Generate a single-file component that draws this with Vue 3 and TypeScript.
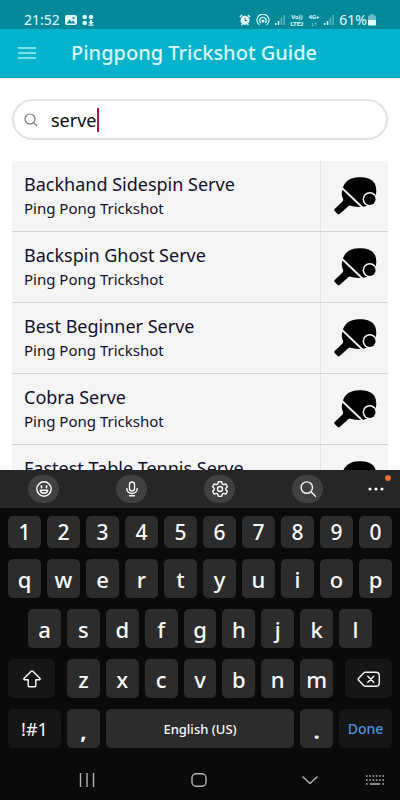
<script setup lang="ts">
import { ref } from 'vue'

const query = ref<string>('serve')

const results: string[] = [
  'Backhand Sidespin Serve',
  'Backspin Ghost Serve',
  'Best Beginner Serve',
  'Cobra Serve',
  'Fastest Table Tennis Serve',
]

const digits: string[] = [...'1234567890']
const topRow: string[] = [...'qwertyuiop']
const homeRow: string[] = [...'asdfghjkl']
const bottomRow: string[] = [...'zxcvbnm']

function type(key: string): void {
  query.value += key
}

function erase(): void {
  query.value = query.value.slice(0, -1)
}
</script>

<template>
  <div class="screen">
    <div class="status">
      <span class="clock">21:52</span>
      <svg class="pic" viewBox="0 0 12 12" width="12" height="12">
        <rect x="0" y="1" width="12" height="10" rx="2" fill="#e4fbfd" />
        <path d="M1.5 9.5 4.5 5.5 6.5 8 8 6.5 10.5 9.5Z" fill="#04899a" />
        <circle cx="8.5" cy="4" r="1.1" fill="#04899a" />
      </svg>
      <svg class="dots" viewBox="0 0 12 12" width="12" height="12" fill="#e4fbfd">
        <circle cx="2.7" cy="3" r="2.3" />
        <circle cx="9" cy="3" r="2.3" />
        <circle cx="2.7" cy="9" r="2.3" />
        <path d="M8 6h2v2h1.800L9 10.500 6.200 8H8ZM6.500 10.500h5v1.300h-5Z" />
      </svg>
      <span class="grow"></span>
      <svg viewBox="0 0 12 12" width="12" height="12" fill="none" stroke="#e4fbfd">
        <circle cx="6" cy="6.300" r="4.500" fill="#e4fbfd" stroke="none" />
        <path d="M.8 3 3 1.200M11.200 3 9 1.200M2.500 11.200l1-1M9.500 11.200l-1-1" stroke-width="1.500" />
        <path d="M6 3.800v2.700h2" stroke="#04899a" />
      </svg>
      <svg viewBox="0 0 14 12" width="14" height="12" fill="none" stroke="#e4fbfd" stroke-width="1.200">
        <path d="M3.500 11a6 6 0 1 1 7 0M4.800 9a3.300 3.300 0 1 1 4.400 0" />
        <circle cx="7" cy="7" r="1" fill="#e4fbfd" />
      </svg>
      <svg class="bars" viewBox="0 0 10 12" width="10" height="12" fill="#e4fbfd">
        <rect x="0" y="9" width="1.500" height="2" />
        <rect x="2.800" y="7" width="1.500" height="4" />
        <rect x="5.600" y="4" width="1.500" height="7" opacity=".4" />
        <rect x="8.400" y="1" width="1.500" height="10" opacity=".4" />
      </svg>
      <span class="net"><span>Vo))</span><span>LTE2</span></span>
      <span class="net"><span>4G+</span><span>↓↑</span></span>
      <svg class="bars" viewBox="0 0 10 12" width="10" height="12" fill="#e4fbfd">
        <rect x="0" y="9" width="1.500" height="2" />
        <rect x="2.800" y="7" width="1.500" height="4" />
        <rect x="5.600" y="4" width="1.500" height="7" opacity=".4" />
        <rect x="8.400" y="1" width="1.500" height="10" opacity=".4" />
      </svg>
      <span class="charge">61%</span>
      <svg viewBox="0 0 8 12" width="8" height="12" fill="#e4fbfd">
        <path d="M2.500 0h3v1.500H7A1 1 0 0 1 8 2.500V6H0V2.500a1 1 0 0 1 1-1h1.500Z" opacity=".45" />
        <path d="M0 6h8v4.500a1 1 0 0 1-1 1H1a1 1 0 0 1-1-1Z" />
      </svg>
    </div>

    <header class="appbar">
      <button class="menu" type="button" aria-label="Menu">
        <svg viewBox="0 0 18 12" width="18" height="12" stroke="#a3f0f4" stroke-width="1.300">
          <path d="M0 1h18M0 6h18M0 11h18" />
        </svg>
      </button>
      <h1>Pingpong Trickshot Guide</h1>
    </header>

    <main>
      <label class="search">
        <svg viewBox="0 0 14 14" width="14" height="14" fill="none" stroke="#777" stroke-width="1.200">
          <circle cx="6" cy="6" r="5" />
          <path d="m9.800 9.800 3.200 3.200" />
        </svg>
        <input v-model="query" type="text" aria-label="Search trickshots" />
        <span class="caret"></span>
      </label>

      <ul class="results">
        <li v-for="name in results" :key="name">
          <a href="#">
            <span class="text">
              <span class="name">{{ name }}</span>
              <span class="kind">Ping Pong Trickshot</span>
            </span>
            <span class="thumb">
              <svg viewBox="0 0 44 40" width="44" height="40">
                <path d="M10.300 10.500C12.500 5 18 1.300 25.500 1.300c3.500 0 8.500 0 12.500 2.400 4.200 2.600 5.300 7 5.300 11.300C43.300 24 37 31 27 31c-5 0-8-.7-10-1.400l-1.500.4-8.800 8q-1 .9-2 0l-3-3q-1-1 0-1.900l8.300-8 .2-2.100c-1.300-2.500-1.700-4.500-1.300-7Z" />
                <path d="M8.500 11.500 29.500 31.500" stroke="#f5f5f5" stroke-width="1.800" />
                <circle cx="36.800" cy="23.200" r="7.200" fill="#f5f5f5" />
                <circle cx="36.800" cy="23.200" r="5.700" />
              </svg>
            </span>
          </a>
        </li>
      </ul>
    </main>

    <section class="keyboard" aria-label="Keyboard">
      <div class="tools">
        <button type="button" aria-label="Emoji">
          <svg viewBox="0 0 18 18" width="18" height="18">
            <circle cx="9" cy="9" r="7.200" />
            <path d="M5.200 10.200h7.600c-.5 4-7.100 4-7.600 0Z" />
            <path d="M6.500 6v1.600M11.500 6v1.600" stroke-width="1.800" />
          </svg>
        </button>
        <button type="button" aria-label="Voice input">
          <svg viewBox="0 0 18 18" width="18" height="18">
            <rect x="6.500" y="2" width="5" height="9" rx="2.500" />
            <path d="M3.800 8.500c0 6.700 10.400 6.700 10.400 0M6.500 15.800h5" />
          </svg>
        </button>
        <button type="button" aria-label="Settings">
          <svg viewBox="0 0 18 18" width="18" height="18">
            <path d="M7.400 1.700h3.200l.6 2.200 1.300.8 2.300-.7 1.600 2.800-1.600 1.600v1.300l1.600 1.600-1.600 2.800-2.300-.7-1.300.8-.6 2.200H7.400l-.6-2.200-1.300-.8-2.300.7-1.600-2.800 1.600-1.600V8.400L1.600 6.800 3.200 4l2.300.7 1.300-.8Z" />
            <circle cx="9" cy="9" r="2.500" />
          </svg>
        </button>
        <button type="button" aria-label="Search">
          <svg viewBox="0 0 18 18" width="18" height="18">
            <circle cx="7.800" cy="7.600" r="5.700" />
            <path d="m12 11.800 4.500 4.400" />
          </svg>
        </button>
        <button class="more" type="button" aria-label="More">
          <svg viewBox="0 0 16 4" width="16" height="4">
            <circle cx="2" cy="2" r="1.600" />
            <circle cx="8" cy="2" r="1.600" />
            <circle cx="14" cy="2" r="1.600" />
          </svg>
          <span class="badge"></span>
        </button>
      </div>

      <div class="keys">
        <div class="row short">
          <button v-for="k in digits" :key="k" type="button" @click="type(k)">{{ k }}</button>
        </div>
        <div class="row">
          <button v-for="k in topRow" :key="k" type="button" @click="type(k)">{{ k }}</button>
        </div>
        <div class="row inset">
          <button v-for="k in homeRow" :key="k" type="button" @click="type(k)">{{ k }}</button>
        </div>
        <div class="row wide">
          <button class="dark side" type="button" aria-label="Shift">
            <svg viewBox="0 0 20 20" width="20" height="20">
              <path d="M9.200 2.300q.8-.8 1.600 0l7 7q1 1.200-.5 1.400h-3.500v5.800q0 1.200-1.200 1.200H7.400q-1.200 0-1.200-1.200v-5.800H2.700q-1.500-.2-.5-1.400Z" />
            </svg>
          </button>
          <div class="row letters">
            <button v-for="k in bottomRow" :key="k" type="button" @click="type(k)">{{ k }}</button>
          </div>
          <button class="dark side" type="button" aria-label="Backspace" @click="erase">
            <svg viewBox="0 0 24 20" width="24" height="20">
              <path d="M8.500 3.200h10.300q3.500 0 3.500 3.500v7q0 3.500-3.500 3.500H8.500q-1 0-1.800-.8l-5-5.200q-1-1 0-2l5-5.200q.8-.8 1.800-.8Z" />
              <path d="m10.800 7.200 6 6M16.800 7.200l-6 6" />
            </svg>
          </button>
        </div>
        <div class="row last">
          <button class="dark symbols" type="button">!#1</button>
          <button class="punct" type="button" @click="type(',')">,</button>
          <button class="space" type="button" @click="type(' ')">English (US)</button>
          <button class="punct" type="button" @click="type('.')">.</button>
          <button class="dark done" type="button">Done</button>
        </div>
      </div>

      <nav class="system">
        <button type="button" aria-label="Recent apps">
          <svg viewBox="0 0 16 14" width="16" height="14"><path d="M1.500 0v14M8 0v14M14.500 0v14" /></svg>
        </button>
        <button type="button" aria-label="Home">
          <svg viewBox="0 0 16 14" width="16" height="14"><rect x="1" y=".700" width="14" height="12.600" rx="4" /></svg>
        </button>
        <button type="button" aria-label="Hide keyboard">
          <svg viewBox="0 0 16 14" width="16" height="14"><path d="m.500 3.500 7.500 7 7.500-7" /></svg>
        </button>
        <button class="switch" type="button" aria-label="Change keyboard">
          <svg viewBox="0 0 18 10" width="18" height="10">
            <path d="M0 1h18M0 5h18" stroke-width="1.600" stroke-dasharray="1.600 1.680" />
            <path d="M0 9h1.600M4 9h10M16.400 9H18" stroke-width="1.600" />
          </svg>
        </button>
      </nav>
    </section>
  </div>
</template>

<style>
body {
  margin: 0;
  background: #fff;
}
</style>

<style scoped>
* {
  box-sizing: border-box;
}

.screen {
  display: flex;
  flex-direction: column;
  height: 100vh;
  font-family: "Noto Sans", "Open Sans", sans-serif;
  color: #11112b;
}

button {
  display: flex;
  align-items: center;
  justify-content: center;
  padding: 0;
  border: 0;
  background: none;
  color: inherit;
  font: inherit;
}

svg {
  display: block;
  flex: none;
}

.status {
  display: flex;
  align-items: center;
  gap: 5px;
  height: 29px;
  padding: 10px 24px 0;
  background: #04899a;
  color: #e4fbfd;
  font-size: 14px;
  line-height: 18px;
}

.grow {
  flex: 1;
}

.net {
  display: flex;
  flex-direction: column;
  align-items: center;
  font-family: Roboto, sans-serif;
  font-size: 6px;
  font-weight: 700;
  line-height: 7px;
}

.charge {
  margin-right: -4px;
}

.appbar {
  display: flex;
  align-items: center;
  gap: 35px;
  height: 49px;
  padding: 0 18px;
  border-bottom: 1px solid #059fb6;
  background: #05b2cb;
}

.menu {
  height: 32px;
}

h1 {
  margin: 0;
  color: #d8fcfd;
  font-size: 20px;
  font-weight: 500;
  line-height: 28px;
  white-space: nowrap;
}

main {
  flex: 1;
  min-height: 0;
  padding: 21px 12px 0;
  overflow: hidden;
}

.search {
  display: flex;
  align-items: center;
  height: 41px;
  padding: 0 10px;
  border: 2px solid #e2e2e2;
  border-radius: 21px;
}

.search input {
  field-sizing: content;
  min-width: 1px;
  margin-left: 13px;
  padding: 0;
  border: 0;
  outline: 0;
  background: none;
  color: #0a0a0a;
  font: inherit;
  font-size: 18px;
  line-height: 24px;
  caret-color: transparent;
}

.caret {
  width: 2px;
  height: 24px;
  background: #b3124f;
}

.results {
  margin: 21px 0 0;
  padding: 0;
  list-style: none;
}

.results a {
  display: flex;
  height: 71px;
  border-bottom: 1px solid #d4d4d4;
  background: #f5f5f5;
  color: inherit;
  text-decoration: none;
}

.text {
  display: flex;
  flex: 1;
  flex-direction: column;
  gap: 2px;
  padding: 11px 12px 0;
  border-right: 1px solid #e4e4e8;
}

.name {
  font-size: 18px;
  line-height: 24px;
}

.kind {
  font-size: 15px;
  line-height: 20px;
}

.thumb {
  display: flex;
  align-items: center;
  justify-content: center;
  width: 67px;
}

.keyboard {
  flex: none;
  background: #0a0a0a;
  color: #fafafa;
}

.keyboard svg {
  fill: none;
  stroke: #fafafa;
  stroke-width: 1.400;
  stroke-linecap: round;
  stroke-linejoin: round;
}

.tools {
  display: flex;
  align-items: center;
  justify-content: space-between;
  height: 38px;
  padding: 0 9px 0 28px;
  background: #262626;
}

.tools button {
  width: 31px;
  height: 28px;
  border-radius: 14px;
  background: #404040;
}

.tools .more {
  position: relative;
  width: 30px;
  margin-left: -19px;
  background: none;
}

.tools .more svg {
  fill: #fafafa;
  stroke: none;
}

.badge {
  position: absolute;
  top: 0;
  right: 0;
  width: 6px;
  height: 6px;
  border-radius: 50%;
  background: #e8702a;
}

.keys {
  display: flex;
  flex-direction: column;
  gap: 11px;
  padding: 8px 8px 0;
}

.row {
  display: flex;
  gap: 6px;
  height: 39px;
}

.row button {
  flex: 1;
  min-width: 0;
  border-radius: 5px;
  background: #2c2c2c;
  font-size: 22px;
  font-weight: 500;
  line-height: 28px;
}

.row.short button {
  font-size: 21px;
}

.short {
  height: 32px;
}

.inset {
  padding: 0 20px;
}

.wide {
  gap: 12px;
}

.letters {
  flex: 7;
}

.row .dark {
  background: #161616;
}

.row .side {
  flex: none;
  width: 47px;
}

.row .symbols,
.row .done {
  flex: none;
  width: 53px;
  font-size: 18px;
  font-weight: 400;
}

.row .done {
  color: #4f8fdc;
  font-size: 14px;
  font-weight: 500;
}

.row .punct {
  flex: none;
  align-items: flex-end;
  width: 33px;
  padding-bottom: 4px;
  font-weight: 700;
}

.row .space {
  font-size: 13px;
}

.system {
  display: flex;
  align-items: center;
  height: 52px;
  padding: 12px 16px 0 31px;
}

.system button {
  flex: 3;
  height: 32px;
}

.system .switch {
  flex: none;
  width: 18px;
}

.keyboard .system svg {
  stroke: #b4b4b4;
  stroke-linecap: butt;
}
</style>
